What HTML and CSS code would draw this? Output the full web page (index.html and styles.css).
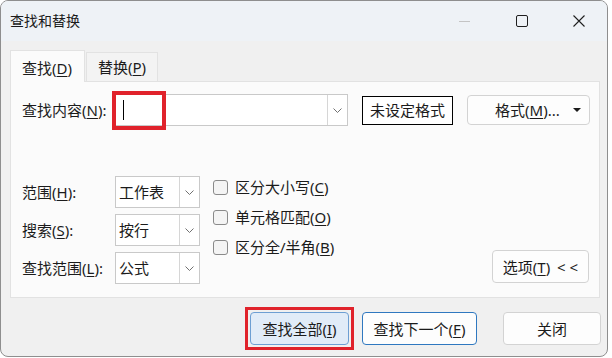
FILE: index.html
```html
<!DOCTYPE html>
<html lang="zh-CN">
<head>
  <meta charset="UTF-8">
  <title>查找和替换</title>
  <link rel="stylesheet" href="styles.css">
</head>
<body>
  <div class="window">
    <div class="titlebar">
      <span class="title">查找和替换</span>
      <div class="controls">
        <span class="ctl">
          <svg width="11" height="11" viewBox="0 0 11 11"><line x1="0" y1="5.5" x2="11" y2="5.5" stroke="#c4c4c4" stroke-width="1"/></svg>
        </span>
        <span class="ctl">
          <svg width="12" height="12" viewBox="0 0 12 12"><rect x="0.5" y="0.5" width="11" height="11" rx="1.5" fill="none" stroke="#1f1f1f" stroke-width="1"/></svg>
        </span>
        <span class="ctl">
          <svg width="12" height="12" viewBox="0 0 12 12"><path d="M0.5 0.5 L11.5 11.5 M11.5 0.5 L0.5 11.5" stroke="#1f1f1f" stroke-width="1.1"/></svg>
        </span>
      </div>
    </div>

    <div class="content">
      <div class="tabs">
        <div class="tab active">查找(<u>D</u>)</div>
        <div class="tab">替换(<u>P</u>)</div>
      </div>

      <div class="panel">
        <div class="find-row">
          <label class="lbl">查找内容(<u>N</u>):</label>
          <div class="combo combo-find">
            <div class="combo-text"><span class="caret"></span></div>
            <div class="combo-arrow">
              <svg width="9" height="5" viewBox="0 0 9 5"><path d="M0.5 0.5 L4.5 4.5 L8.5 0.5" fill="none" stroke="#707070" stroke-width="1"/></svg>
            </div>
            <div class="mark"></div>
          </div>
          <button class="btn-plain">未设定格式</button>
          <button class="btn btn-format"><span>格式(<u>M</u>)...</span><span class="tri"></span></button>
        </div>

        <div class="opts">
          <div class="fields">
            <label class="lbl">范围(<u>H</u>):</label>
            <div class="combo combo-small">
              <div class="combo-text">工作表</div>
              <div class="combo-arrow">
                <svg width="9" height="5" viewBox="0 0 9 5"><path d="M0.5 0.5 L4.5 4.5 L8.5 0.5" fill="none" stroke="#707070" stroke-width="1"/></svg>
              </div>
            </div>
            <label class="lbl">搜索(<u>S</u>):</label>
            <div class="combo combo-small">
              <div class="combo-text">按行</div>
              <div class="combo-arrow">
                <svg width="9" height="5" viewBox="0 0 9 5"><path d="M0.5 0.5 L4.5 4.5 L8.5 0.5" fill="none" stroke="#707070" stroke-width="1"/></svg>
              </div>
            </div>
            <label class="lbl">查找范围(<u>L</u>):</label>
            <div class="combo combo-small">
              <div class="combo-text">公式</div>
              <div class="combo-arrow">
                <svg width="9" height="5" viewBox="0 0 9 5"><path d="M0.5 0.5 L4.5 4.5 L8.5 0.5" fill="none" stroke="#707070" stroke-width="1"/></svg>
              </div>
            </div>
          </div>

          <div class="checks">
            <div class="check"><span class="box"></span>区分大小写(<u>C</u>)</div>
            <div class="check"><span class="box"></span>单元格匹配(<u>O</u>)</div>
            <div class="check"><span class="box"></span>区分全/半角(<u>B</u>)</div>
          </div>

          <button class="btn btn-options">选项(<u>T</u>) <span class="arrows">&lt; &lt;</span></button>
        </div>
      </div>

      <div class="footer">
        <div class="mark-wrap">
          <button class="btn btn-all">查找全部(<u>I</u>)</button>
        </div>
        <button class="btn btn-next">查找下一个(<u>F</u>)</button>
        <button class="btn btn-close">关闭</button>
      </div>
    </div>
  </div>
</body>
</html>
```

FILE: styles.css
```css
body {
  margin: 0;
  background: #ffffff;
  font-family: "Noto Sans", "Noto Sans CJK SC", sans-serif;
  font-size: 15px;
  color: #1b1b1b;
}
u {
  text-decoration-thickness: 1px;
  text-underline-offset: 2px;
}
.window {
  width: 606px;
  height: 355px;
  border: 1px solid #8e8e8e;
  border-radius: 8px;
  background: #f0f0f0;
  overflow: hidden;
}
.titlebar {
  height: 40px;
  display: flex;
  align-items: center;
  background: #eef2f6;
}
.title {
  padding-left: 9px;
  font-size: 14px;
  line-height: 20px;
}
.controls {
  margin-left: auto;
  display: flex;
  height: 40px;
}
.ctl {
  width: 57px;
  height: 40px;
  display: flex;
  align-items: center;
  justify-content: center;
}
.ctl svg {
  display: block;
}
.content {
  padding: 9px 0 0 9px;
}
.tabs {
  display: flex;
  align-items: flex-end;
  height: 31px;
}
.tab {
  height: 28px;
  padding: 0 11px;
  display: flex;
  align-items: center;
  background: #f3f3f3;
  border: 1px solid #e2e2e2;
  border-bottom: none;
  margin-left: 1px;
  line-height: 20px;
}
.tab.active {
  height: 32px;
  width: 75px;
  margin-left: 0;
  margin-bottom: -1px;
  background: #fbfbfb;
  position: relative;
  z-index: 1;
  padding-top: 2px;
  box-sizing: border-box;
}
.panel {
  width: 588px;
  height: 215px;
  border: 1px solid #e2e2e2;
  background: #fbfbfb;
}
.lbl {
  line-height: 20px;
  white-space: nowrap;
}
.find-row {
  display: flex;
  align-items: center;
  padding: 12px 0 0 11px;
}
.find-row .lbl {
  width: 93px;
}
.combo {
  position: relative;
  display: flex;
  height: 32px;
  box-sizing: border-box;
  border: 1px solid #c9c9c9;
  background: #ffffff;
}
.combo-text {
  flex: 1;
  display: flex;
  align-items: center;
  padding-left: 3px;
  line-height: 20px;
}
.combo-arrow {
  width: 19px;
  border-left: 1px solid #d6d6d6;
  display: flex;
  align-items: center;
  justify-content: center;
}
.combo-arrow svg {
  display: block;
}
.combo-find {
  width: 233px;
}
.caret {
  display: block;
  width: 1px;
  height: 20px;
  margin-left: 4px;
  background: #000000;
}
.mark {
  position: absolute;
  left: -4px;
  top: -4px;
  width: 46px;
  height: 31px;
  border: 4px solid #e0222b;
}
.btn-plain {
  margin-left: 14px;
  width: 91px;
  height: 29px;
  border: 1px solid #000000;
  background: #ffffff;
  font: inherit;
  color: inherit;
  padding: 0;
  line-height: 20px;
}
.btn {
  font: inherit;
  color: inherit;
  padding: 0;
  line-height: 20px;
  background: #fdfdfd;
  border: 1px solid #d3d3d3;
  border-radius: 4px;
}
.btn-format {
  margin-left: 14px;
  width: 123px;
  height: 30px;
  display: flex;
  align-items: center;
  padding: 0 8px 0 27px;
}
.tri {
  margin-left: auto;
  width: 0;
  height: 0;
  border-left: 4px solid transparent;
  border-right: 4px solid transparent;
  border-top: 4px solid #1b1b1b;
}
.opts {
  display: flex;
  margin-top: 50px;
  padding-left: 11px;
}
.fields {
  display: grid;
  grid-template-columns: 93px 85px;
  grid-auto-rows: 32px;
  row-gap: 6px;
  align-items: center;
}
.checks {
  display: flex;
  flex-direction: column;
  gap: 15px;
  margin: 4px 0 0 13px;
}
.check {
  display: flex;
  align-items: center;
  height: 15px;
  line-height: 15px;
  white-space: nowrap;
}
.box {
  width: 13px;
  height: 13px;
  margin-right: 7px;
  border: 1px solid #8a8a8a;
  border-radius: 3px;
  background: #f4f4f4;
}
.btn-options {
  margin: auto 10px 1px auto;
  width: 97px;
  height: 33px;
}
.arrows {
  margin-left: 3px;
}
.footer {
  display: flex;
  align-items: center;
  margin-top: 9px;
  padding-left: 235px;
}
.mark-wrap {
  border: 3px solid #e0222b;
  padding: 2px;
}
.btn-all {
  display: block;
  width: 99px;
  height: 33px;
  background: #e1ecf8;
  border-color: #6d9fd3;
}
.btn-next {
  margin-left: 8px;
  width: 115px;
  height: 33px;
  background: #fdfdfd;
  border-color: #2f78c0;
}
.btn-close {
  margin-left: 26px;
  width: 98px;
  height: 33px;
}
```
